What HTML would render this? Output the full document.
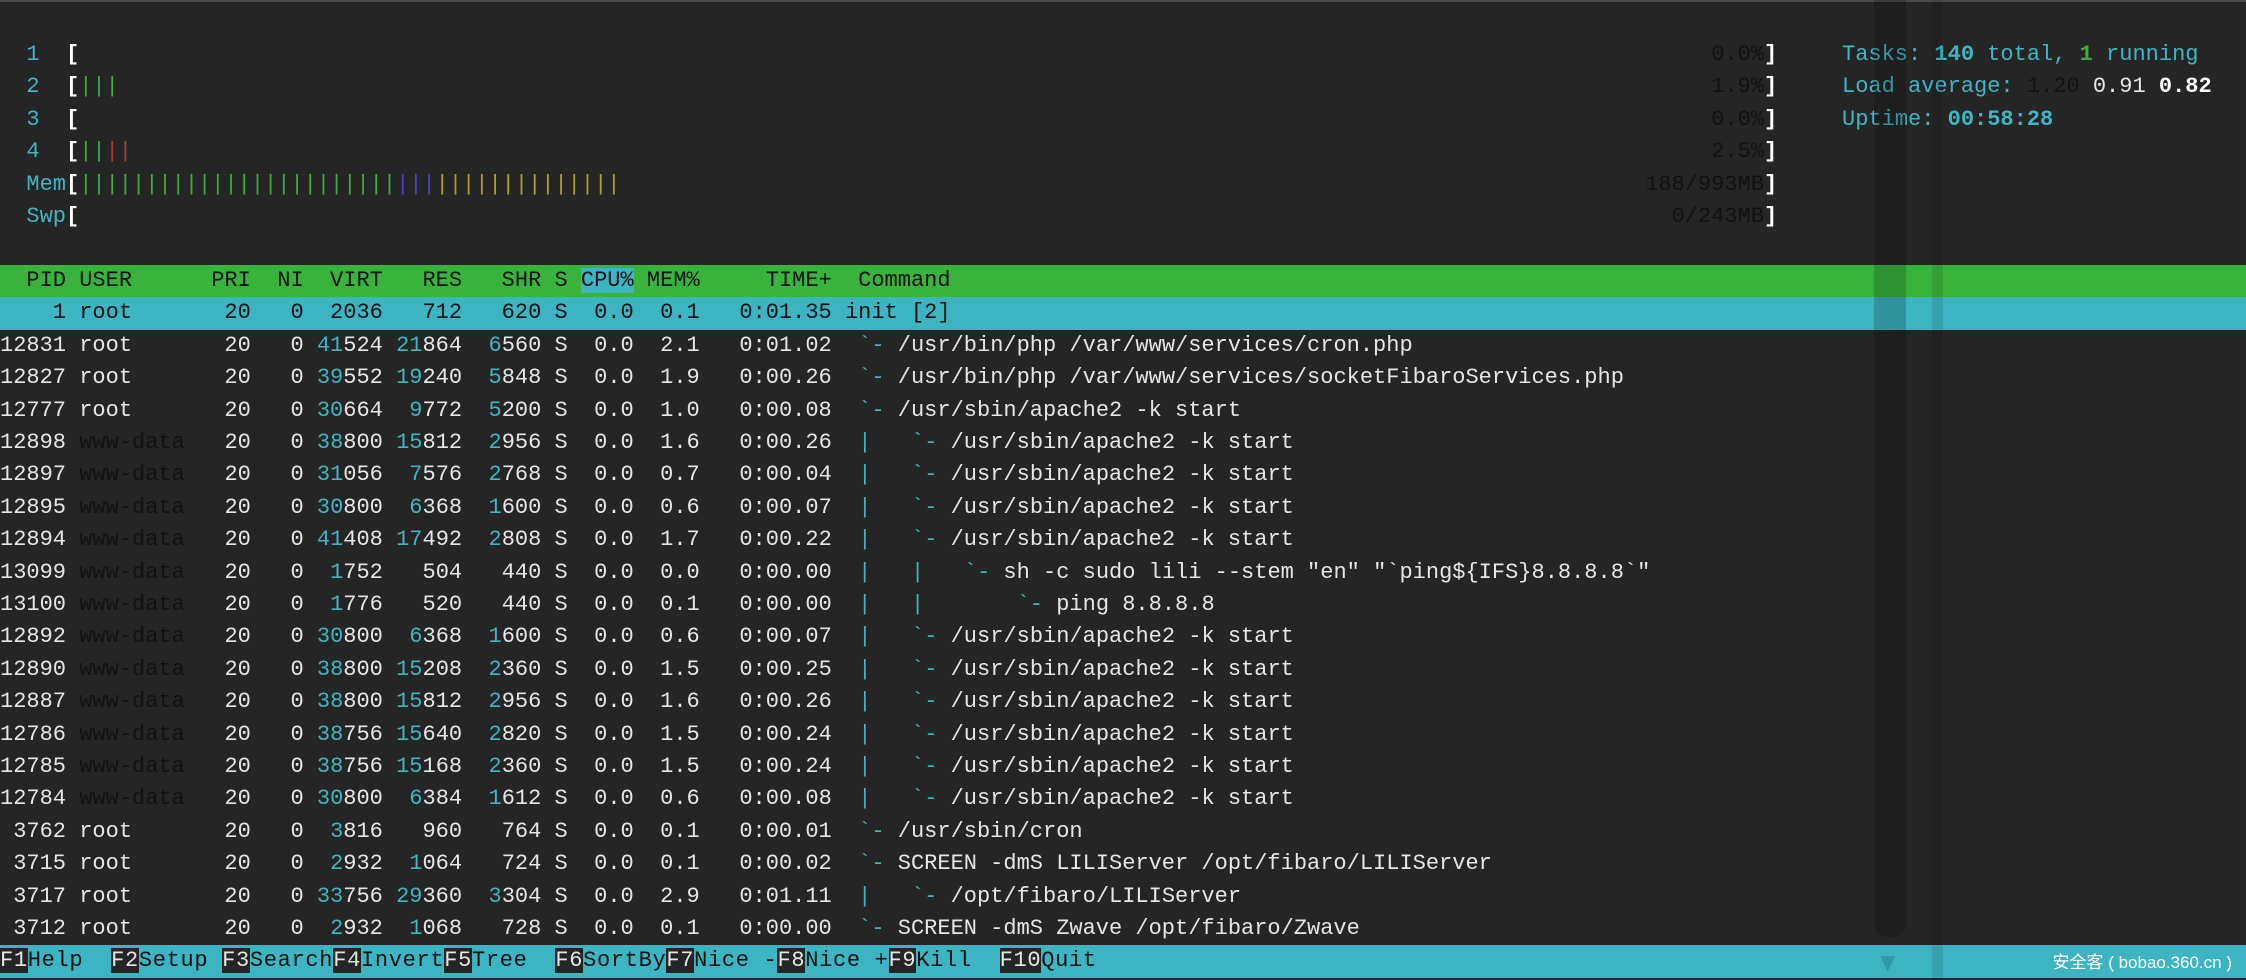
<!DOCTYPE html>
<html><head><meta charset="utf-8">
<style>
html,body{margin:0;padding:0;background:#252525;width:2246px;height:980px;overflow:hidden}
body{position:relative;font-family:"Liberation Mono",monospace;font-size:22px;color:#e6e6e6}
.top{position:absolute;left:0;top:0;width:2246px;height:2px;background:#4a4a4a}
.ln{position:absolute;left:0;width:2246px;height:32.4px;line-height:32.4px;white-space:pre}
.ln span.a{position:absolute;top:0}
.ln span.pc{position:absolute;top:0;right:482px}
.ln span.br{position:absolute;top:0;left:1764px;color:#fff;font-weight:bold}
.ln span.rt{position:absolute;top:0;left:1842px}
.c{color:#3fb6c4}.g{color:#3cae3c}.r{color:#b8372c}.b{color:#4b3fd6}.y{color:#b09e2c}.k{color:#121212}.w{color:#fff;font-weight:bold}
.hdr{background:#3ab33c;color:#111}
.sel{background:#3db4c1;color:#111}
.cpu{background:#3db4c1}
.ft{background:#3db4c1;color:#111;letter-spacing:0.68px}
.fk{background:#252525;color:#e6e6e6}
.bd{font-weight:bold}
.wm{position:absolute;right:14px;top:950px;font-family:"Liberation Sans","Noto Sans CJK SC",sans-serif;font-size:17px;color:#fff;line-height:26px;white-space:pre}
.sb1{position:absolute;left:1874px;top:0;width:32px;height:937px;background:rgba(0,0,0,0.18);border-radius:0 0 14px 14px}
.sb2{position:absolute;left:1932px;top:0;width:11px;height:980px;background:rgba(0,0,0,0.1)}
.arr{position:absolute;left:1880px;top:950px;color:#2e9aa6;font-size:20px;font-family:"DejaVu Sans",sans-serif}
</style></head><body>
<div class="top"></div>

<div class="ln" style="top:39px"><span class="a c" style="left:2ch">1</span><span class="a w" style="left:5ch">[</span><span class="pc k">0.0%</span><span class="br">]</span><span class="rt c">Tasks: <span class="bd">140</span> total, <span class="g bd">1</span> running</span></div>
<div class="ln" style="top:71.4px"><span class="a c" style="left:2ch">2</span><span class="a w" style="left:5ch">[</span><span class="a g" style="left:6ch">|||</span><span class="pc k">1.9%</span><span class="br">]</span><span class="rt c">Load average: <span class="k">1.20</span> <span style="color:#e6e6e6">0.91</span> <span class="w">0.82</span></span></div>
<div class="ln" style="top:103.8px"><span class="a c" style="left:2ch">3</span><span class="a w" style="left:5ch">[</span><span class="pc k">0.0%</span><span class="br">]</span><span class="rt c">Uptime: <span class="bd">00:58:28</span></span></div>
<div class="ln" style="top:136.2px"><span class="a c" style="left:2ch">4</span><span class="a w" style="left:5ch">[</span><span class="a g" style="left:6ch">||</span><span class="a r" style="left:8ch">||</span><span class="pc k">2.5%</span><span class="br">]</span></div>
<div class="ln" style="top:168.6px"><span class="a c" style="left:2ch">Mem</span><span class="a w" style="left:5ch">[</span><span class="a g" style="left:6ch">||||||||||||||||||||||||</span><span class="a b" style="left:30ch">|||</span><span class="a y" style="left:33ch">||||||||||||||</span><span class="pc k">188/993MB</span><span class="br">]</span></div>
<div class="ln" style="top:201px"><span class="a c" style="left:2ch">Swp</span><span class="a w" style="left:5ch">[</span><span class="pc k">0/243MB</span><span class="br">]</span></div>

<div class="ln hdr" style="top:265px">  PID USER      PRI  NI  VIRT   RES   SHR S <span class="cpu">CPU%</span> MEM%     TIME+  Command</div>
<div class="ln sel" style="top:297.4px">    1 root       20   0  2036   712   620 S  0.0  0.1   0:01.35 init [2]</div>
<div class="ln" style="top:329.8px">12831 root       20   0 <span class="c">41</span>524 <span class="c">21</span>864  <span class="c">6</span>560 S  0.0  2.1   0:01.02  <span class="c">`-</span> /usr/bin/php /var/www/services/cron.php</div>
<div class="ln" style="top:362.2px">12827 root       20   0 <span class="c">39</span>552 <span class="c">19</span>240  <span class="c">5</span>848 S  0.0  1.9   0:00.26  <span class="c">`-</span> /usr/bin/php /var/www/services/socketFibaroServices.php</div>
<div class="ln" style="top:394.6px">12777 root       20   0 <span class="c">30</span>664  <span class="c">9</span>772  <span class="c">5</span>200 S  0.0  1.0   0:00.08  <span class="c">`-</span> /usr/sbin/apache2 -k start</div>
<div class="ln" style="top:427px">12898 <span class="k">www-data</span>   20   0 <span class="c">38</span>800 <span class="c">15</span>812  <span class="c">2</span>956 S  0.0  1.6   0:00.26  <span class="c">|   `-</span> /usr/sbin/apache2 -k start</div>
<div class="ln" style="top:459.4px">12897 <span class="k">www-data</span>   20   0 <span class="c">31</span>056  <span class="c">7</span>576  <span class="c">2</span>768 S  0.0  0.7   0:00.04  <span class="c">|   `-</span> /usr/sbin/apache2 -k start</div>
<div class="ln" style="top:491.8px">12895 <span class="k">www-data</span>   20   0 <span class="c">30</span>800  <span class="c">6</span>368  <span class="c">1</span>600 S  0.0  0.6   0:00.07  <span class="c">|   `-</span> /usr/sbin/apache2 -k start</div>
<div class="ln" style="top:524.2px">12894 <span class="k">www-data</span>   20   0 <span class="c">41</span>408 <span class="c">17</span>492  <span class="c">2</span>808 S  0.0  1.7   0:00.22  <span class="c">|   `-</span> /usr/sbin/apache2 -k start</div>
<div class="ln" style="top:556.6px">13099 <span class="k">www-data</span>   20   0  <span class="c">1</span>752   504   440 S  0.0  0.0   0:00.00  <span class="c">|   |   `-</span> sh -c sudo lili --stem "en" "`ping${IFS}8.8.8.8`"</div>
<div class="ln" style="top:589px">13100 <span class="k">www-data</span>   20   0  <span class="c">1</span>776   520   440 S  0.0  0.1   0:00.00  <span class="c">|   |       `-</span> ping 8.8.8.8</div>
<div class="ln" style="top:621.4px">12892 <span class="k">www-data</span>   20   0 <span class="c">30</span>800  <span class="c">6</span>368  <span class="c">1</span>600 S  0.0  0.6   0:00.07  <span class="c">|   `-</span> /usr/sbin/apache2 -k start</div>
<div class="ln" style="top:653.8px">12890 <span class="k">www-data</span>   20   0 <span class="c">38</span>800 <span class="c">15</span>208  <span class="c">2</span>360 S  0.0  1.5   0:00.25  <span class="c">|   `-</span> /usr/sbin/apache2 -k start</div>
<div class="ln" style="top:686.2px">12887 <span class="k">www-data</span>   20   0 <span class="c">38</span>800 <span class="c">15</span>812  <span class="c">2</span>956 S  0.0  1.6   0:00.26  <span class="c">|   `-</span> /usr/sbin/apache2 -k start</div>
<div class="ln" style="top:718.6px">12786 <span class="k">www-data</span>   20   0 <span class="c">38</span>756 <span class="c">15</span>640  <span class="c">2</span>820 S  0.0  1.5   0:00.24  <span class="c">|   `-</span> /usr/sbin/apache2 -k start</div>
<div class="ln" style="top:751px">12785 <span class="k">www-data</span>   20   0 <span class="c">38</span>756 <span class="c">15</span>168  <span class="c">2</span>360 S  0.0  1.5   0:00.24  <span class="c">|   `-</span> /usr/sbin/apache2 -k start</div>
<div class="ln" style="top:783.4px">12784 <span class="k">www-data</span>   20   0 <span class="c">30</span>800  <span class="c">6</span>384  <span class="c">1</span>612 S  0.0  0.6   0:00.08  <span class="c">|   `-</span> /usr/sbin/apache2 -k start</div>
<div class="ln" style="top:815.8px"> 3762 root       20   0  <span class="c">3</span>816   960   764 S  0.0  0.1   0:00.01  <span class="c">`-</span> /usr/sbin/cron</div>
<div class="ln" style="top:848.2px"> 3715 root       20   0  <span class="c">2</span>932  <span class="c">1</span>064   724 S  0.0  0.1   0:00.02  <span class="c">`-</span> SCREEN -dmS LILIServer /opt/fibaro/LILIServer</div>
<div class="ln" style="top:880.6px"> 3717 root       20   0 <span class="c">33</span>756 <span class="c">29</span>360  <span class="c">3</span>304 S  0.0  2.9   0:01.11  <span class="c">|   `-</span> /opt/fibaro/LILIServer</div>
<div class="ln" style="top:913px"> 3712 root       20   0  <span class="c">2</span>932  <span class="c">1</span>068   728 S  0.0  0.1   0:00.00  <span class="c">`-</span> SCREEN -dmS Zwave /opt/fibaro/Zwave</div>

<div class="ln ft" style="top:945.4px"><span class="fk">F1</span>Help  <span class="fk">F2</span>Setup <span class="fk">F3</span>Search<span class="fk">F4</span>Invert<span class="fk">F5</span>Tree  <span class="fk">F6</span>SortBy<span class="fk">F7</span>Nice -<span class="fk">F8</span>Nice +<span class="fk">F9</span>Kill  <span class="fk">F10</span>Quit  </div>

<div class="sb1"></div>
<div class="sb2"></div>
<div class="arr">▼</div>
<div class="wm">安全客 ( bobao.360.cn )</div>
</body></html>
